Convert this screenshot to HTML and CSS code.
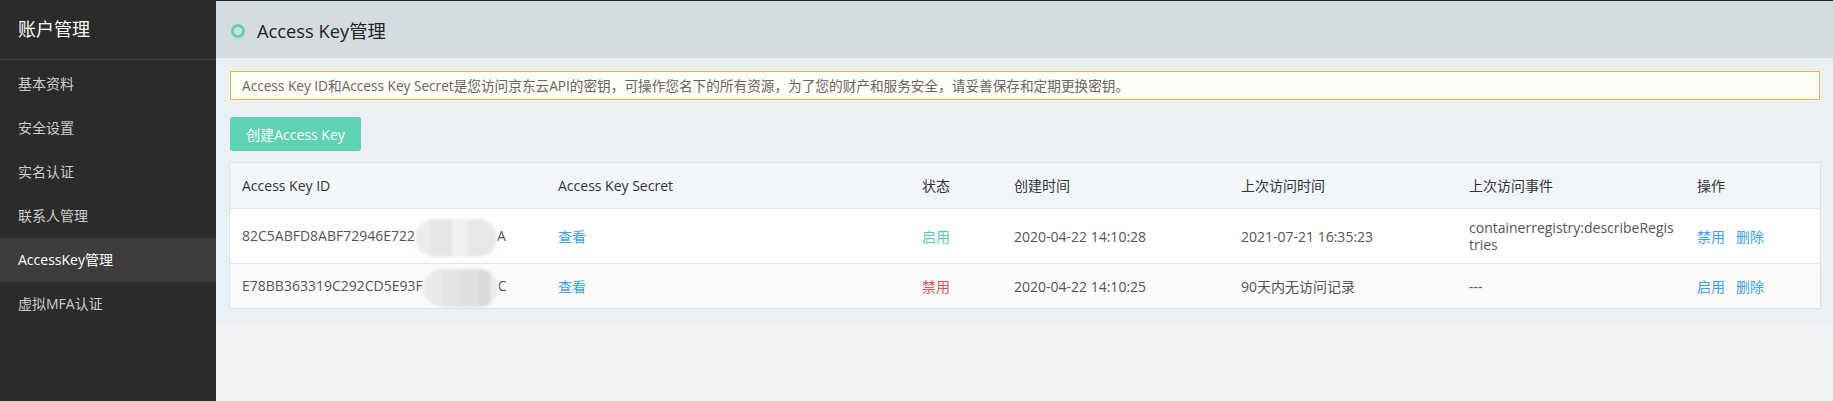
FILE: index.html
```html
<!DOCTYPE html>
<html lang="zh-CN">
<head>
<meta charset="utf-8">
<title>Access Key管理</title>
<link rel="stylesheet" href="styles.css">
</head>
<body>
<div class="app">
  <aside class="sidebar">
    <div class="sidebar-title">账户管理</div>
    <ul class="menu">
      <li class="menu-item">基本资料</li>
      <li class="menu-item">安全设置</li>
      <li class="menu-item">实名认证</li>
      <li class="menu-item">联系人管理</li>
      <li class="menu-item active">AccessKey管理</li>
      <li class="menu-item">虚拟MFA认证</li>
    </ul>
  </aside>
  <main class="main">
    <header class="page-header">
      <span class="ring"></span>
      <h1 class="page-title">Access Key管理</h1>
    </header>
    <section class="content">
      <div class="notice">Access Key ID和Access Key Secret是您访问京东云API的密钥，可操作您名下的所有资源，为了您的财产和服务安全，请妥善保存和定期更换密钥。</div>
      <button class="btn-create" type="button">创建Access Key</button>
      <table class="key-table">
        <colgroup>
          <col class="c-id"><col class="c-secret"><col class="c-status"><col class="c-created"><col class="c-last"><col class="c-event"><col>
        </colgroup>
        <thead>
          <tr>
            <th>Access Key ID</th>
            <th>Access Key Secret</th>
            <th>状态</th>
            <th>创建时间</th>
            <th>上次访问时间</th>
            <th>上次访问事件</th>
            <th>操作</th>
          </tr>
        </thead>
        <tbody>
          <tr class="row-a">
            <td>82C5ABFD8ABF72946E722<span class="mask mask-a"></span>A</td>
            <td><a class="link">查看</a></td>
            <td><span class="on">启用</span></td>
            <td>2020-04-22 14:10:28</td>
            <td>2021-07-21 16:35:23</td>
            <td class="event">containerregistry:describeRegistries</td>
            <td><a class="link">禁用</a><a class="link">删除</a></td>
          </tr>
          <tr class="row-b">
            <td>E78BB363319C292CD5E93F<span class="mask mask-b"></span>C</td>
            <td><a class="link">查看</a></td>
            <td><span class="off">禁用</span></td>
            <td>2020-04-22 14:10:25</td>
            <td>90天内无访问记录</td>
            <td class="event">---</td>
            <td><a class="link">启用</a><a class="link">删除</a></td>
          </tr>
        </tbody>
      </table>
    </section>
  </main>
</div>
</body>
</html>
```

FILE: styles.css
```css
* { box-sizing: border-box; }
html, body { margin: 0; padding: 0; }
body {
  font-family: "Open Sans", "Noto Sans CJK SC", sans-serif;
  font-size: 14px;
  color: #555;
  background: #f2f2f4;
}
.app { display: flex; min-height: 401px; }

.sidebar {
  width: 216px;
  flex: none;
  background: #2b2b2b;
  color: #cfcfcf;
}
.sidebar-title {
  height: 60px;
  line-height: 59px;
  padding-left: 18px;
  font-size: 18px;
  color: #fff;
  border-bottom: 1px solid #444;
}
.menu { list-style: none; margin: 0; padding: 2px 0 0; }
.menu-item {
  height: 44px;
  line-height: 44px;
  padding-left: 18px;
  font-size: 14px;
  color: #cdcdcd;
}
.menu-item.active { background: #3d3d3d; color: #fff; }

.main { flex: 1; min-width: 0; border-top: 1px solid #222; }
.page-header {
  height: 57px;
  background: #d5dce0;
  display: flex;
  align-items: center;
  padding-left: 15px;
}
.ring {
  width: 14px;
  height: 14px;
  border: 3.5px solid #5fd1b5;
  border-radius: 50%;
  margin-top: 2px;
}
.page-title {
  margin: 2px 0 0 12px;
  font-size: 18.3px;
  font-weight: normal;
  color: #222;
  line-height: 24px;
}

.content {
  background: #ebf0f4;
  padding: 13px 13px 14px 14px;
}
.notice {
  height: 29px;
  line-height: 27px;
  padding: 0 11px;
  border: 1px solid #f5b52a;
  background: #fffdf5;
  color: #666;
  font-size: 13.65px;
}
.btn-create {
  display: block;
  margin-top: 17px;
  height: 34px;
  width: 131px;
  padding: 0;
  border: none;
  border-radius: 3px;
  background: #5dd3b4;
  color: #fff;
  font-family: inherit;
  font-size: 14px;
}

.key-table {
  margin-top: 11px;
  width: calc(100% + 2px);
  margin-left: -1px;
  table-layout: fixed;
  border-collapse: separate;
  border-spacing: 0;
  border: 1px solid #dde3ea;
  background: #fff;
}
.c-id { width: 316px; }
.c-secret { width: 364px; }
.c-status { width: 92px; }
.c-created { width: 227px; }
.c-last { width: 228px; }
.c-event { width: 228px; }
.key-table th,
.key-table td {
  text-align: left;
  font-weight: normal;
  padding: 10px 12px;
  line-height: 17px;
  vertical-align: middle;
}
.key-table thead tr { height: 46px; }
.key-table th {
  background: #f2f5fa;
  color: #333;
  border-bottom: 1px solid #dde3ea;
}
.row-a td { border-bottom: 1px solid #dde3ea; background: #fff; }
.row-b { height: 44px; }
.row-b td { background: #fafafa; }
.key-table td.event { word-break: break-all; padding-right: 10px; }

.link { color: #3aa0f3; cursor: pointer; }
.link + .link { margin-left: 11px; }
.on { color: #4fd0b0; }
.off { color: #e5534f; }

.mask {
  display: inline-block;
  height: 38px;
  margin: -12px 0;
  vertical-align: middle;
  border-radius: 19px;
  filter: blur(1.5px);
}
.mask-a {
  width: 82px;
  background: linear-gradient(90deg, #ececec 0 20%, #e6e6e6 20% 45%, #f0f0f0 45% 65%, #e8e8e8 65% 100%);
}
.mask-b {
  width: 75px;
  background: linear-gradient(90deg, #eaeaea 0 25%, #e4e4e4 25% 50%, #e0e0e0 50% 75%, #d9d9d9 75% 90%, #ececec 90% 100%);
}
```
